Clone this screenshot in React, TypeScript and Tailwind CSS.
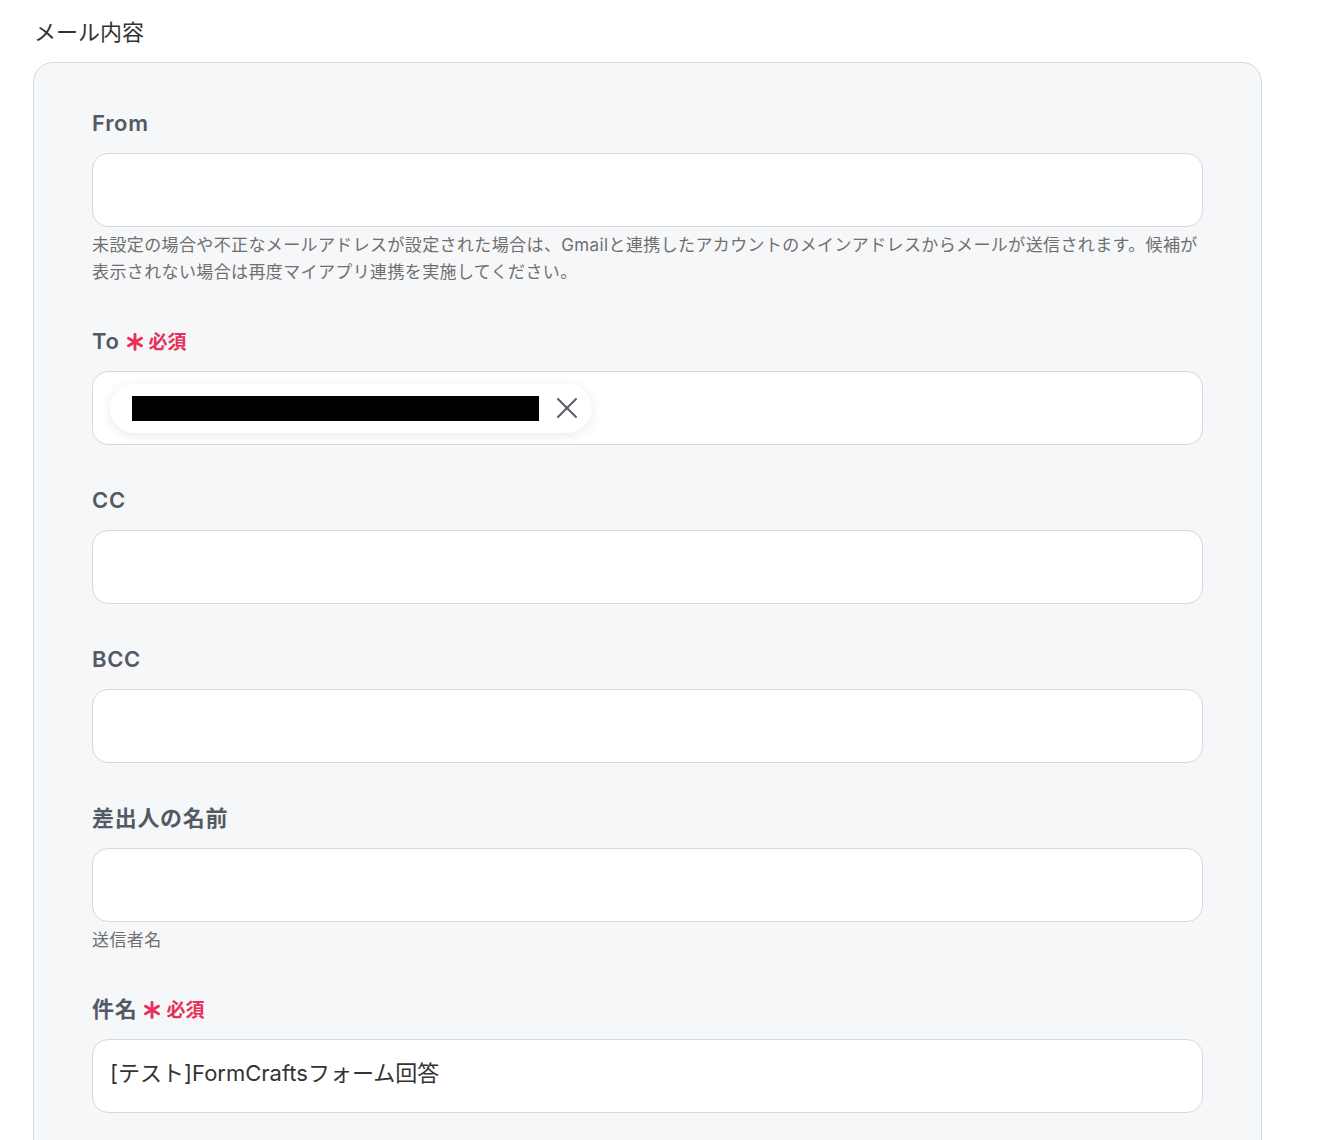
import { Asterisk, X } from "lucide-react";

const FONT = { fontFamily: 'Inter, "Noto Sans CJK JP", sans-serif' };

function Label({ text, required }: { text: string; required?: boolean }) {
  return (
    <div className="mb-[14px] flex h-[32px] items-center">
      <span className="text-[22px] font-semibold leading-[32px] tracking-[0.7px] text-[#535a64]">{text}</span>
      {required && (
        <span className="flex items-center text-[#e7305a]">
          <Asterisk size={30} strokeWidth={2.3} className="-mr-[3px] mt-[2px]" />
          <span className="ml-[2px] mt-[3px] text-[19px] font-semibold leading-[32px]">必須</span>
        </span>
      )}
    </div>
  );
}

function Input({ value, children }: { value?: string; children?: React.ReactNode }) {
  return (
    <div className="flex h-[74px] w-full items-center rounded-[16px] border border-[#d3d9e1] bg-white px-[17px]">
      {children}
      {value && <span className="-mt-[6px] text-[22px] text-[#333]">{value}</span>}
    </div>
  );
}

function Help({ children }: { children: React.ReactNode }) {
  return <p className="mt-[5px] text-[17px] leading-[27px] tracking-[0.38px] text-[#6f6f6f]">{children}</p>;
}

export default function App() {
  return (
    <div className="min-h-[1140px] bg-white pl-[33px] pt-[17px]" style={FONT}>
      <h2 className="mb-[15px] pl-px text-[22px] leading-[30px] text-[#333]">メール内容</h2>
      <div className="h-[1100px] w-[1229px] rounded-[20px] border border-[#d3d9e1] bg-[#f6f7f9] px-[58px] pt-[44px]">
        <div className="flex flex-col gap-[39px]">
          <div>
            <Label text="From" />
            <Input />
            <Help>
              未設定の場合や不正なメールアドレスが設定された場合は、Gmailと連携したアカウントのメインアドレスからメールが送信されます。候補が
              <br />
              表示されない場合は再度マイアプリ連携を実施してください。
            </Help>
          </div>
          <div>
            <Label text="To" required />
            <Input>
              <div className="flex h-[49px] items-center rounded-full bg-white pl-[22px] pr-[7px] shadow-[0_2px_12px_rgba(0,0,0,0.09)]">
                <div className="h-[25px] w-[407px] bg-black" />
                <X size={36} strokeWidth={1.35} className="ml-[10px] text-[#5a5f66]" />
              </div>
            </Input>
          </div>
          <div>
            <Label text="CC" />
            <Input />
          </div>
          <div>
            <Label text="BCC" />
            <Input />
          </div>
          <div>
            <Label text="差出人の名前" />
            <Input />
            <Help>送信者名</Help>
          </div>
          <div>
            <Label text="件名" required />
            <Input value="[テスト]FormCraftsフォーム回答" />
          </div>
        </div>
      </div>
    </div>
  );
}
